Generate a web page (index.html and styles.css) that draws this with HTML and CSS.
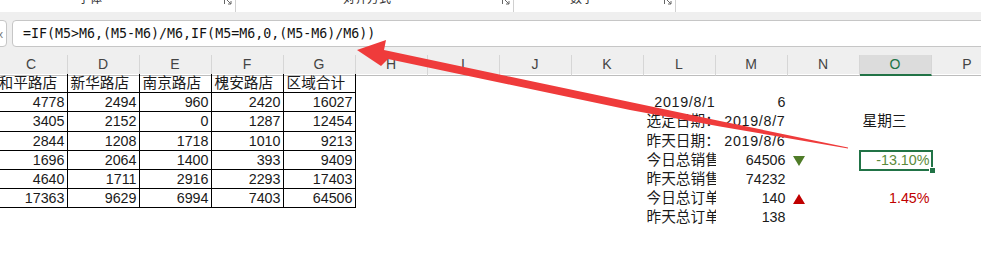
FILE: index.html
```html
<!DOCTYPE html>
<html lang="zh-CN">
<head>
  <meta charset="UTF-8">
  <title>销售日报</title>
  <link rel="stylesheet" href="styles.css">
</head>
<body>
  <div class="ribbon">
    <div class="group g-font">
      <span class="glabel">字体</span>
      <svg class="launcher" width="8" height="8" viewBox="0 0 8 8"><path d="M0.5 7V0.5H7M2 2L7 7M7 4V7H4" fill="none" stroke="#666" stroke-width="1"/></svg>
    </div>
    <div class="group g-align">
      <span class="glabel">对齐方式</span>
      <svg class="launcher" width="8" height="8" viewBox="0 0 8 8"><path d="M0.5 7V0.5H7M2 2L7 7M7 4V7H4" fill="none" stroke="#666" stroke-width="1"/></svg>
    </div>
    <div class="group g-num">
      <span class="glabel">数字</span>
      <svg class="launcher" width="8" height="8" viewBox="0 0 8 8"><path d="M0.5 7V0.5H7M2 2L7 7M7 4V7H4" fill="none" stroke="#666" stroke-width="1"/></svg>
    </div>
  </div>

  <div class="fbar">
    <div class="namebox"><span>fx</span></div>
    <div class="formula">=IF(M5&gt;M6,(M5-M6)/M6,IF(M5=M6,0,(M5-M6)/M6))</div>
  </div>

  <div class="sheet">
    <div class="colheads">
      <div>C</div><div>D</div><div>E</div><div>F</div><div>G</div><div>H</div><div>I</div>
      <div>J</div><div>K</div><div>L</div><div>M</div><div>N</div><div class="sel">O</div><div>P</div>
    </div>

    <div class="row">
      <div class="t">和平路店</div><div class="t">新华路店</div><div class="t">南京路店</div><div class="t">槐安路店</div><div class="t">区域合计</div>
    </div>
    <div class="row">
      <div class="t n">4778</div><div class="t n">2494</div><div class="t n">960</div><div class="t n">2420</div><div class="t n">16027</div>
      <div class="col-l n date">2019/8/1</div><div class="col-m n">6</div>
    </div>
    <div class="row">
      <div class="t n">3405</div><div class="t n">2152</div><div class="t n">0</div><div class="t n">1287</div><div class="t n">12454</div>
      <div class="col-l">选定日期：</div><div class="col-m n date">2019/8/7</div><div class="col-o">星期三</div>
    </div>
    <div class="row">
      <div class="t n">2844</div><div class="t n">1208</div><div class="t n">1718</div><div class="t n">1010</div><div class="t n">9213</div>
      <div class="col-l">昨天日期：</div><div class="col-m n date">2019/8/6</div>
    </div>
    <div class="row">
      <div class="t n">1696</div><div class="t n">2064</div><div class="t n">1400</div><div class="t n">393</div><div class="t n">9409</div>
      <div class="col-l">今日总销售额</div><div class="col-m n">64506</div>
      <div class="col-n"><svg width="12" height="10" viewBox="0 0 12 10"><path d="M0 0H12L6 10Z" fill="#4f7c28"/></svg></div>
      <div class="col-o n active"><span class="down">-13.10%</span><i class="handle"></i></div>
    </div>
    <div class="row">
      <div class="t n">4640</div><div class="t n">1711</div><div class="t n">2916</div><div class="t n">2293</div><div class="t n">17403</div>
      <div class="col-l">昨天总销售额</div><div class="col-m n">74232</div>
    </div>
    <div class="row">
      <div class="t n">17363</div><div class="t n">9629</div><div class="t n">6994</div><div class="t n">7403</div><div class="t n">64506</div>
      <div class="col-l">今日总订单数</div><div class="col-m n">140</div>
      <div class="col-n"><svg width="12" height="10" viewBox="0 0 12 10"><path d="M0 10H12L6 0Z" fill="#c00000"/></svg></div>
      <div class="col-o n up">1.45%</div>
    </div>
    <div class="row">
      <div class="col-l">昨天总订单数</div><div class="col-m n">138</div>
    </div>
  </div>

  <svg class="arrow" width="981" height="276" viewBox="0 0 981 276">
    <polygon points="357,50 386,40 384,50 630,102 720,121 848,147.5 848,148.5 720,126.5 630,110 388,59 381,66" fill="#ef3b3b"/>
  </svg>
</body>
</html>
```

FILE: styles.css
```css
body {
  margin: 0;
  width: 981px;
  height: 276px;
  overflow: hidden;
  position: relative;
  background: #fff;
  font-family: 'Liberation Sans', 'Noto Sans CJK SC', sans-serif;
  font-size: 14.67px;
  color: #1a1a1a;
}

/* ribbon, only the bottom edge is visible */
.ribbon {
  display: flex;
  height: 12px;
  overflow: hidden;
  background: #fff;
}
.group {
  display: flex;
  align-items: flex-start;
  border-right: 1px solid #d0d0d0;
  height: 12px;
  box-sizing: border-box;
}
.glabel {
  font-size: 12px;
  line-height: 12px;
  margin-top: -7px;
  color: #333;
}
.launcher {
  margin-left: auto;
  margin-top: -3px;
  margin-right: 3px;
}
.g-font { width: 236px; }
.g-font .glabel { margin-left: 78px; }
.g-align { width: 278px; }
.g-align .glabel { margin-left: 107px; }
.g-num { width: 162px; }
.g-num .glabel { margin-left: 56px; }

/* formula bar */
.fbar {
  display: flex;
  background: #efefef;
  padding: 8px 0 8px 0;
  gap: 5px;
}
.namebox {
  width: 30px;
  margin-left: -23px;
  height: 27px;
  box-sizing: border-box;
  background: #fff;
  border: 1px solid #c6c6c6;
  border-radius: 0 4px 4px 0;
  display: flex;
  align-items: center;
  justify-content: flex-end;
  padding-right: 3px;
  font-size: 11px;
  color: #777;
  overflow: hidden;
}
.formula {
  flex: 1;
  height: 27px;
  box-sizing: border-box;
  margin-right: -10px;
  background: #fff;
  border: 1px solid #c6c6c6;
  border-radius: 4px 0 0 4px;
  padding-left: 10px;
  font-family: 'DejaVu Sans Mono', 'Liberation Mono', monospace;
  font-size: 13.3px;
  line-height: 25px;
  color: #111;
}

/* sheet */
.sheet {
  margin-left: -4.5px;
  background: #fff;
}
.colheads {
  display: grid;
  grid-template-columns: repeat(14, 72px);
  height: 19px;
  background: #efefef;
  font-size: 14px;
}
.colheads div {
  box-sizing: border-box;
  border-right: 1px solid #d6d6d6;
  border-bottom: 1px solid #bdbdbd;
  text-align: center;
  line-height: 19px;
  color: #444;
}
.colheads .sel {
  background: #dcdcdc;
  color: #217346;
  border-bottom: 2px solid #217346;
}
.row {
  display: grid;
  grid-template-columns: repeat(14, 72px);
  height: 19.2px;
}
.row div {
  box-sizing: border-box;
  padding: 0 3px;
  line-height: 19px;
  white-space: nowrap;
  overflow: hidden;
}
.row .t {
  border-right: 1px solid #000;
  border-bottom: 1px solid #000;
}
.row .n {
  text-align: right;
  padding-right: 2px;
  font-size: 14.3px;
}
.row .date {
  letter-spacing: 0.7px;
}
.row .col-l {
  padding-right: 0;
}
.col-l { grid-column: 10; }
.col-m { grid-column: 11; }
.col-n { grid-column: 12; }
.col-o { grid-column: 13; }
.row .col-n {
  padding: 5px 0 0 5px;
  line-height: 0;
}
.row .active {
  overflow: visible;
  position: relative;
  outline: 2px solid #217346;
  outline-offset: -1px;
}
.down {
  color: #5a8a3a;
}
.handle {
  position: absolute;
  right: -4px;
  bottom: -4px;
  width: 5px;
  height: 5px;
  background: #217346;
  border: 1px solid #fff;
}
.up {
  color: #c00000;
}

.arrow {
  position: absolute;
  left: 0;
  top: 0;
  pointer-events: none;
}
```
